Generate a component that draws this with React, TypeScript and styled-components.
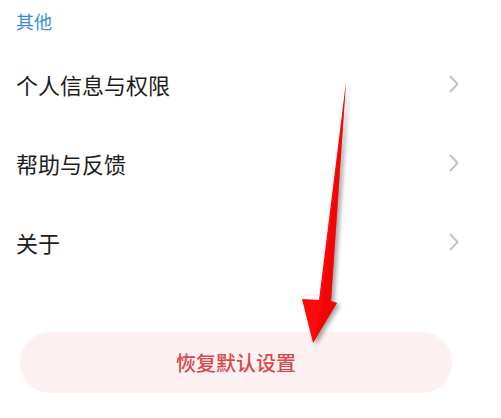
import styled, { createGlobalStyle } from "styled-components";

const GlobalStyle = createGlobalStyle`
    html, body {
        margin: 0;
        padding: 0;
        background: #ffffff;
    }
    body {
        font-family: "Noto Sans CJK SC", "Noto Sans", sans-serif;
    }
`;

const Page = styled.div`
    position: relative;
    width: 501px;
    height: 418px;
    overflow: hidden;
    background: #ffffff;
`;

const SectionTitle = styled.div`
    height: 44px;
    padding: 8px 0 0 16px;
    box-sizing: border-box;
    font-size: 18px;
    line-height: 26px;
    color: #3b8bd6;
`;

const List = styled.ul`
    list-style: none;
    margin: 0;
    padding: 0;
`;

const Row = styled.li`
    display: flex;
    align-items: center;
    justify-content: space-between;
    height: 79px;
    padding: 0 42px 0 16px;
    font-size: 22px;
    color: #1c1c1c;
`;

const Chevron = styled.svg`
    width: 10px;
    height: 18px;
    flex-shrink: 0;
`;

const ButtonWrap = styled.div`
    padding: 51px 49px 0 20px;
`;

const ResetButton = styled.button`
    width: 100%;
    height: 61px;
    border: none;
    border-radius: 31px;
    background: #fdf1f1;
    color: #d9474a;
    font-family: "Noto Sans CJK SC", "Noto Sans", sans-serif;
    font-size: 20px;
    font-weight: 500;
    cursor: pointer;
`;

const Arrow = styled.svg`
    position: absolute;
    left: 0;
    top: 0;
    width: 501px;
    height: 418px;
    pointer-events: none;
    filter: drop-shadow(3px 2px 2px rgba(0, 0, 0, 0.35));
`;

const items = ["个人信息与权限", "帮助与反馈", "关于"];

function App() {
    return (
        <>
            <GlobalStyle />
            <Page>
                <SectionTitle>其他</SectionTitle>
                <List>
                    {items.map((label) => (
                        <Row key={label}>
                            {label}
                            <Chevron viewBox="0 0 10 18">
                                <polyline
                                    points="1.5,1.5 8.5,9 1.5,16.5"
                                    fill="none"
                                    stroke="#c4c4c4"
                                    strokeWidth="2"
                                    strokeLinecap="round"
                                    strokeLinejoin="round"
                                />
                            </Chevron>
                        </Row>
                    ))}
                </List>
                <ButtonWrap>
                    <ResetButton>恢复默认设置</ResetButton>
                </ButtonWrap>
                <Arrow viewBox="0 0 501 418">
                    <polygon
                        points="346,82 331,301 337,303 313,343 302,299 319,300"
                        fill="#ff0a0a"
                    />
                    <polygon
                        points="346,82 331,301 337,303 313,343 322,301"
                        fill="#e80000"
                        opacity="0.5"
                    />
                </Arrow>
            </Page>
        </>
    );
}

export default App;
